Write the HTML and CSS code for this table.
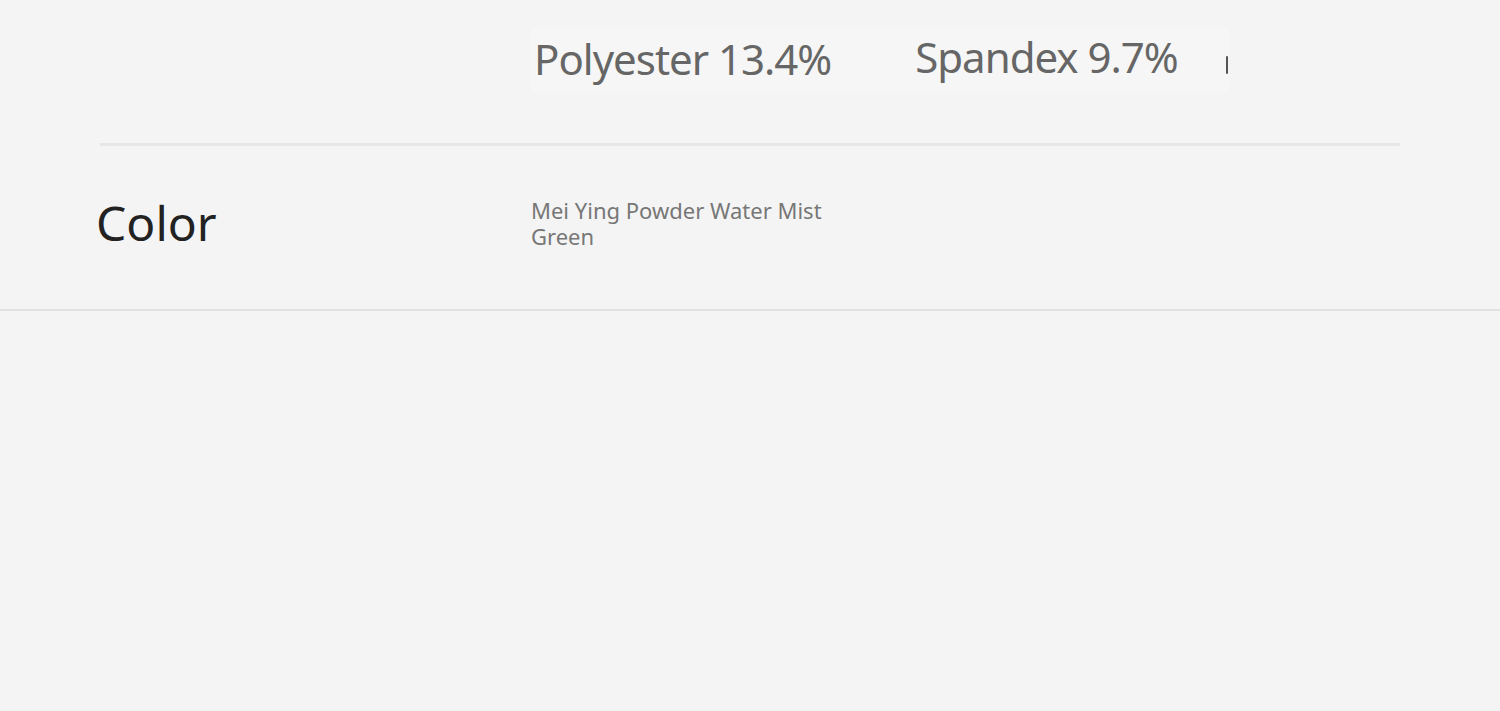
FILE: index.html
```html
<!DOCTYPE html>
<html lang="en">
<head>
    <meta charset="UTF-8">
    <meta name="viewport" content="width=device-width, initial-scale=1.0">
    <title>Product details</title>
    <link rel="stylesheet" href="styles.css">
</head>
<body>
    <section class="specs">
        <div class="spec-row materials">
            <div class="spec-label"></div>
            <div class="spec-value">
                <div class="material-strip">
                    <span class="material">Polyester 13.4%</span>
                    <span class="material">Spandex 9.7%</span>
                    <span class="strip-edge"></span>
                </div>
            </div>
        </div>
        <hr class="divider">
        <div class="spec-row color-row">
            <div class="spec-label">Color</div>
            <div class="spec-value">
                <p class="color-name">Mei Ying Powder Water Mist Green</p>
            </div>
        </div>
    </section>
    <div class="page-rest"></div>
</body>
</html>
```

FILE: styles.css
```css
html, body {
    margin: 0;
    padding: 0;
    background: #f4f4f4;
    font-family: "Noto Sans", "Open Sans", sans-serif;
}
.specs {
    border-bottom: 2px solid #e2e2e2;
}
.spec-row {
    display: flex;
    padding: 0 100px;
}
.spec-label {
    width: 435px;
    flex-shrink: 0;
    margin-left: -4px;
    font-size: 48px;
    color: #222;
}
.materials {
    padding-top: 28px;
    height: 143px;
    box-sizing: border-box;
}
.material-strip {
    display: flex;
    align-items: center;
    width: 698px;
    height: 64px;
    background: #f6f6f6;
    position: relative;
}
.material {
    font-size: 42px;
    color: #666;
    letter-spacing: -1px;
    margin-left: 3px;
    margin-top: -4px;
}
.material + .material {
    margin-left: 84px;
    margin-top: -8px;
}
.strip-edge {
    position: absolute;
    right: 1px;
    top: 28px;
    width: 2px;
    height: 18px;
    background: #555;
    border-radius: 1px;
}
.divider {
    margin: 0 100px;
    border: none;
    height: 3px;
    background: #e6e6e6;
}
.color-row {
    height: 163px;
    box-sizing: border-box;
    padding-bottom: 10px;
    align-items: center;
}
.color-row .spec-value {
    width: 320px;
}
.color-name {
    margin: 0;
    font-size: 22px;
    line-height: 26px;
    color: #777;
}
.page-rest {
    height: 400px;
}
```
